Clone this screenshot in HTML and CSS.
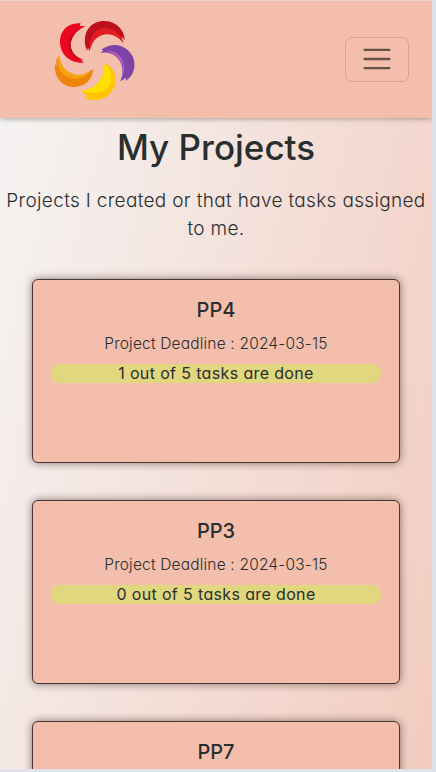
FILE: index.html
```html
<!DOCTYPE html>
<html lang="en">
<head>
<meta charset="utf-8">
<title>My Projects</title>
<link rel="stylesheet" href="styles.css">
</head>
<body>
<div class="page">
  <header class="navbar">
    <svg class="logo" viewBox="0 0 300 300" aria-hidden="true">
      <path fill="#e90820" d="M110 40C73 36 46 62 48 98C50 137 80 160 120 158L111 150L117 149C66 132 68 74 124 48L107 48Z"/>
      <path fill="#c90a1b" d="M124 48C66 67 54 118 101 149L117 149C66 132 68 74 124 48Z"/>
      <path fill="#bd101d" d="M124 108C116 60 145 31 184 33C219 35 242 62 242 91L232 79L238 99C210 54 146 58 137 123L132 113L129 122Z"/>
      <path fill="#e31b25" d="M137 123C132 78 156 54 188 54C212 55 231 74 238 99C208 60 151 62 137 123Z"/>
      <path fill="#7d43a5" d="M171 120C206 92 249 105 266 139C279 170 268 198 245 213L247 203L229 214C250 170 220 119 169 129L178 121Z"/>
      <path fill="#b05bc0" d="M187 124C226 116 260 164 229 214C249 175 228 134 187 124Z"/>
      <path fill="#ef850c" d="M33 161C28 204 58 232 94 231C126 229 146 206 148 178L137 183C112 208 53 203 45 137L37 151L37 170Z"/>
      <path fill="#f6a313" d="M45 137C30 177 65 209 99 206C118 204 131 195 139 182C107 206 56 195 45 137Z"/>
      <path fill="#ffc400" d="M184 160C222 181 225 226 195 254C172 274 140 274 118 262L132 261L111 242C151 240 179 214 181 169Z"/>
      <path fill="#ffe000" d="M184 160C210 190 208 226 179 242C157 253 130 249 111 242C151 240 179 214 181 169Z"/>
    </svg>
    <button class="toggler" aria-label="Toggle navigation">
      <svg viewBox="0 0 30 30"><path d="M4 7h22M4 15h22M4 23h22"/></svg>
    </button>
  </header>
  <main>
    <h1>My Projects</h1>
    <p class="intro">Projects I created or that have tasks assigned<br>to me.</p>
    <section class="projects">
      <article class="card"><h2>PP4</h2><p class="deadline">Project Deadline : 2024-03-15</p><p class="progress">1 out of 5 tasks are done</p></article>
      <article class="card"><h2>PP3</h2><p class="deadline">Project Deadline : 2024-03-15</p><p class="progress">0 out of 5 tasks are done</p></article>
      <article class="card"><h2>PP7</h2></article>
    </section>
  </main>
</div>
</body>
</html>
```
FILE: styles.css
```css
* { box-sizing: border-box; }
body {
  margin: 0;
  height: 772px;
  overflow: hidden;
  background: #dfe2ec;
  color: #292e2e;
  font-family: Inter, "Open Sans", sans-serif;
  font-feature-settings: "cv11" 1;
}
.page {
  width: 432px;
  height: 769px;
  overflow: hidden;
  background: linear-gradient(105deg, #f5f5f5 0%, #f4e3dd 45%, #f3cbbf 100%);
}
.navbar {
  display: flex;
  justify-content: space-between;
  align-items: flex-start;
  height: 118px;
  padding: 10px 23px 0 44px;
  background: #f3beac;
  border-top: 1px solid #e9d0c8;
  box-shadow: 0 1px 5px rgba(70, 70, 60, .45);
}
.logo { width: 100px; height: 100px; margin-top: -1px; }
.toggler {
  display: flex;
  align-items: center;
  justify-content: center;
  width: 64px;
  height: 45px;
  margin-top: 26px;
  padding: 0;
  background: transparent;
  border: 1px solid #d9a294;
  border-radius: 7px;
}
.toggler svg { width: 36px; height: 34px; position: relative; left: -.5px; top: -.5px; }
.toggler path { fill: none; stroke: #65504a; stroke-width: 2; stroke-linecap: round; }
h1, h2, p { margin: 0; text-align: center; white-space: nowrap; }
h1 { height: 58px; font-size: 35px; line-height: 58px; font-weight: 500; }
.intro { height: 56px; margin-top: 11px; font-size: 19px; line-height: 28px; font-weight: 300; letter-spacing: .33px; }
.projects { display: grid; gap: 37px; padding: 36px 32px 0; }
.card {
  height: 184px;
  padding: 17px 18px 0;
  background: #f3beac;
  border: 1px solid #493733;
  border-radius: 6px;
  box-shadow: 0 0 8px rgba(60, 40, 35, .6);
}
.card h2 { height: 26px; font-size: 20px; line-height: 26px; font-weight: 500; }
.deadline { height: 24px; margin-top: 9px; font-size: 15.5px; line-height: 24px; font-weight: 300; letter-spacing: .18px; }
.progress { height: 19px; margin-top: 8px; background: #e1d77e; border-radius: 9px; font-size: 16px; line-height: 18px; letter-spacing: .36px; }
```
